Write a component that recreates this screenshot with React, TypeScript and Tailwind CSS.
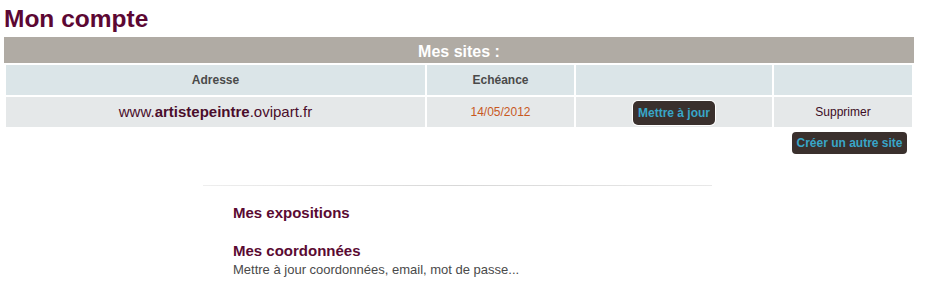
import React from "react";

const font = { fontFamily: '"Liberation Sans", Arial, Helvetica, sans-serif' };

export default function App() {
  return (
    <div className="w-[927px] h-[282px] bg-white overflow-hidden" style={font}>
      <div className="pl-[4px] pt-[5px] text-[24.5px] leading-[28px] font-bold text-[#5c0733]">
        Mon compte
      </div>
      <div className="ml-[4px] mt-[4px] w-[910px]">
        <div className="h-[26px] bg-[#b0aba4] pt-[3px] text-center text-[16px] leading-[23px] font-bold text-white">
          Mes sites :
        </div>
        <div className="grid grid-cols-[419px_147px_196px_138px] gap-[2px] p-[2px]">
          <div className="h-[30px] bg-[#dbe5e8] flex items-center justify-center text-[12px] font-bold text-[#4a4a4a]">
            Adresse
          </div>
          <div className="h-[30px] bg-[#dbe5e8] flex items-center justify-center text-[12px] font-bold text-[#4a4a4a]">
            Echéance
          </div>
          <div className="h-[30px] bg-[#dbe5e8]" />
          <div className="h-[30px] bg-[#dbe5e8]" />

          <div className="h-[30px] bg-[#e5e8e9] flex items-center justify-center text-[15px] text-[#4a0d2b]">
            <span>
              www.<span className="font-bold">artistepeintre</span>.ovipart.fr
            </span>
          </div>
          <div className="h-[30px] bg-[#e5e8e9] flex items-center justify-center text-[12px] text-[#c8591f]">
            14/05/2012
          </div>
          <div className="h-[30px] bg-[#e5e8e9] flex items-center justify-center">
            <span className="mt-[2px] w-[82px] h-[24px] flex items-center justify-center rounded-[5px] bg-[#3a302d] ring-1 ring-white text-[12px] font-bold text-[#38a6c8]">
              Mettre à jour
            </span>
          </div>
          <div className="h-[30px] bg-[#e5e8e9] flex items-center justify-center text-[12px] text-[#3c0c24]">
            Supprimer
          </div>
        </div>
        <div className="flex justify-end pr-[7px] mt-[3px]">
          <span className="w-[115px] h-[22px] flex items-center justify-center rounded-[4px] bg-[#3a302d] text-[12px] font-bold text-[#38a6c8]">
            Créer un autre site
          </span>
        </div>
        <div className="ml-[199px] mt-[31px] w-[509px]">
          <div className="h-[1px] bg-linear-to-r from-[#eeeeee] via-[#d8d8d8] to-[#e8e8e8]" />
          <div className="pl-[30px] pt-[18px]">
            <div className="text-[15px] leading-[18px] font-bold text-[#5a0a32]">
              Mes expositions
            </div>
            <div className="mt-[20px] text-[15px] leading-[18px] font-bold text-[#5a0a32]">
              Mes coordonnées
            </div>
            <div className="mt-[2px] text-[13px] leading-[16px] text-[#4a4a4a]">
              Mettre à jour coordonnées, email, mot de passe...
            </div>
          </div>
        </div>
      </div>
    </div>
  );
}
